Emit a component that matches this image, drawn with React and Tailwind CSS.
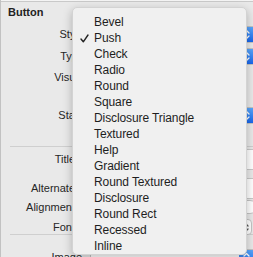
import React from 'react'

const styles = [
  'Bevel', 'Push', 'Check', 'Radio', 'Round', 'Square', 'Disclosure Triangle', 'Textured',
  'Help', 'Gradient', 'Round Textured', 'Disclosure', 'Round Rect', 'Recessed', 'Inline',
]

function Chevrons({ color = 'white' }) {
  return (
    <svg width="7" height="11" viewBox="0 0 7 11" fill="none" stroke={color} strokeWidth="1.3" strokeLinecap="round" strokeLinejoin="round">
      <path d="M1 4 L3.5 1.5 L6 4" />
      <path d="M1 7 L3.5 9.5 L6 7" />
    </svg>
  )
}

function Popup() {
  return (
    <div className="flex-1 ml-[8px] mr-[-4px] h-[17px] rounded-[4px] bg-white border border-[#c4c4c4] flex justify-end overflow-hidden">
      <div className="w-[17px] h-full bg-gradient-to-b from-[#5aa6fb] to-[#1766ec] flex items-center justify-center pr-[2px]">
        <Chevrons />
      </div>
    </div>
  )
}

function Field() {
  return <div className="flex-1 ml-[8px] mr-[-4px] h-[21px] bg-white border border-[#c8c8c8]" />
}

function Row({ label, labelW = 'w-[83px]', h, className = '', children }) {
  return (
    <div className={`flex items-center ${h} ${className}`}>
      <div className={`${labelW} shrink-0 text-right text-[11px] text-[#262626]`}>{label}</div>
      {children}
    </div>
  )
}

export default function App() {
  return (
    <div className="relative w-[253px] h-[257px] overflow-hidden bg-[#e9e9e9] border-l border-[#c2c2c2] font-['Liberation_Sans',Arial,sans-serif]">
      <div className="h-[1px] bg-[#f4f4f4]" />
      <div className="h-[1px] bg-[#c9c9c9]" />

      <div className="h-[21px] flex items-center pl-[7px] text-[11px] font-bold text-[#222]">Button</div>

      <Row label="Style" h="h-[23px]"><Popup /></Row>
      <Row label="Type" h="h-[21px]"><Popup /></Row>
      <Row label="Visual" h="h-[20px]" />
      <div className="h-[18px]" />
      <Row label="State" h="h-[20px]"><Popup /></Row>
      <div className="h-[21px]" />

      <div className="ml-[9px] h-px bg-[#cfcfcf]" />

      <Row label="Title" labelW="w-[74px]" h="h-[24px]"><Field /></Row>
      <Row label="Alternate" labelW="w-[74px]" h="h-[22px]" className="mt-[6px]"><Field /></Row>
      <Row label="Alignment" labelW="w-[74px]" h="h-[16px]">
        <div className="flex-1 ml-[8px] mr-[-4px] h-[14px] rounded-[7px] bg-white border border-[#c4c4c4]" />
      </Row>
      <Row label="Font" labelW="w-[74px]" h="h-[14px]" className="mt-[5px]">
        <div className="flex-1" />
        <div className="w-[14px] h-[16px] mr-[1px] rounded-[4px] bg-white border border-[#c4c4c4] flex items-center justify-center">
          <Chevrons color="#555" />
        </div>
      </Row>

      <div className="ml-[9px] h-px bg-[#cfcfcf]" />

      <Row label="Image" labelW="w-[81px]" h="h-[22px]" className="mt-[11px]"><Popup /></Row>

      <div className="absolute left-[71px] top-[7px] w-[175px] h-[248px] rounded-[5px] bg-[#f0f0f0] border border-[#d3d3d3] shadow-[0_3px_10px_rgba(0,0,0,0.25)] pt-[6px] pb-[1px]">
        {styles.map(s => (
          <div key={s} className="h-[16px] flex items-center text-[12px] text-[#1e1e1e] tracking-[-0.1px]">
            <div className="w-[21px] shrink-0 flex justify-end pr-[5px]">
              {s === 'Push' && (
                <svg width="9" height="9" viewBox="0 0 9 9" fill="none" stroke="#222" strokeWidth="1.4" strokeLinecap="round" strokeLinejoin="round">
                  <path d="M1 5 L3.3 7.8 L8 1" />
                </svg>
              )}
            </div>
            <span>{s}</span>
          </div>
        ))}
      </div>
    </div>
  )
}
